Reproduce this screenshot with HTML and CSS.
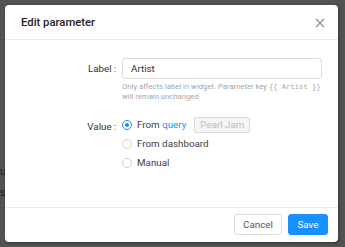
FILE: index.html
```html
<!DOCTYPE html>
<html>
<head>
<meta charset="utf-8">
<link rel="stylesheet" href="styles.css">
</head>
<body>
<div class="page">
  <div class="bg-line bg-l1">ut</div>
  <div class="bg-line bg-l2">s</div>
</div>
<div class="modal">
  <div class="modal-header">
    <span class="modal-title">Edit parameter</span>
    <svg class="close" width="10" height="10" viewBox="0 0 10 10"><path d="M1 1L9 9M9 1L1 9" stroke="#8c8c8c" stroke-width="1.1" fill="none"/></svg>
  </div>
  <div class="modal-body">
    <div class="row row-label">
      <div class="lbl">Label<span class="colon">:</span></div>
      <div class="ctl">
        <div class="input">Artist</div>
        <div class="help">Only affects label in widget. Parameter key <span class="mono">{{ Artist }}</span> will remain unchanged</div>
      </div>
    </div>
    <div class="row row-value">
      <div class="lbl lbl-value">Value<span class="colon">:</span></div>
      <div class="ctl radios">
        <div class="radio-row"><span class="radio checked"></span><span>From <span class="link">query</span></span><span class="pill">Pearl Jam</span></div>
        <div class="radio-row"><span class="radio"></span><span>From dashboard</span></div>
        <div class="radio-row"><span class="radio"></span><span>Manual</span></div>
      </div>
    </div>
  </div>
  <div class="modal-footer">
    <button class="btn">Cancel</button>
    <button class="btn primary">Save</button>
  </div>
</div>
</body>
</html>
```

FILE: styles.css
```css
html, body {
  margin: 0;
  padding: 0;
}
body {
  width: 345px;
  height: 247px;
  background: #525252;
  font-family: Roboto, "Liberation Sans", Arial, sans-serif;
  position: relative;
  overflow: hidden;
}
.page {
  position: absolute;
  left: 0;
  top: 0;
  width: 100%;
  height: 100%;
}
.bg-line {
  position: absolute;
  left: 0;
  font-size: 11px;
  color: #1e1e1e;
  letter-spacing: -2px;
}
.bg-l1 { top: 165px; }
.bg-l2 { top: 186px; }
.modal {
  position: absolute;
  left: 5px;
  top: 5px;
  width: 333px;
  height: 237px;
  background: #fff;
  border-radius: 4px;
  box-shadow: 1px 1px 3px rgba(0,0,0,0.35);
  display: flex;
  flex-direction: column;
}
.modal-header {
  height: 35px;
  box-sizing: border-box;
  border-bottom: 1px solid #ececec;
  display: flex;
  align-items: center;
  justify-content: space-between;
  padding: 1px 13px 0 16px;
}
.modal-title {
  font-size: 11.3px;
  color: #222;
  font-weight: 500;
}
.close { display: block; }
.modal-body {
  flex: 1;
  padding-top: 18px;
  font-size: 9.8px;
  color: #404040;
}
.row {
  display: flex;
}
.lbl {
  width: 111px;
  text-align: right;
  box-sizing: border-box;
  color: #333;
  line-height: 21px;
}
.colon {
  margin-left: 2px;
}
.ctl {
  margin-left: 6px;
  width: 200px;
}
.input {
  height: 21px;
  box-sizing: border-box;
  border: 1px solid #dcdcdc;
  border-radius: 3px;
  padding-left: 8px;
  line-height: 19px;
  color: #333;
}
.help {
  margin-top: 3px;
  font-size: 7.7px;
  line-height: 10px;
  color: #a6a6a6;
  width: 204px;
}
.mono {
  font-family: "Liberation Mono", monospace;
  font-size: 7.2px;
  white-space: nowrap;
}
.row-value {
  margin-top: 15px;
}
.lbl-value {
  line-height: 16px;
  padding-top: 2px;
}
.radios {
  display: flex;
  flex-direction: column;
  gap: 4px;
}
.radio-row {
  display: flex;
  align-items: center;
  height: 15px;
  gap: 5px;
}
.radio {
  width: 10px;
  height: 10px;
  box-sizing: border-box;
  border: 1px solid #d0d0d0;
  border-radius: 50%;
  position: relative;
  flex: none;
}
.radio.checked {
  border-color: #1890ff;
}
.radio.checked::after {
  content: "";
  position: absolute;
  left: 2px;
  top: 2px;
  width: 4px;
  height: 4px;
  border-radius: 50%;
  background: #1890ff;
}
.link { color: #1890ff; }
.pill {
  margin-left: 3px;
  width: 56px;
  height: 16px;
  box-sizing: border-box;
  border: 1px solid #d9d9d9;
  background: #f5f5f5;
  border-radius: 2px;
  color: #bfbfbf;
  padding-left: 5px;
  line-height: 14px;
}
.modal-footer {
  height: 35px;
  box-sizing: border-box;
  border-top: 1px solid #ececec;
  display: flex;
  justify-content: flex-end;
  align-items: center;
  gap: 6px;
  padding: 0 10px 2px 0;
}
.btn {
  height: 21px;
  box-sizing: border-box;
  border: 1px solid #dcdcdc;
  border-radius: 3px;
  background: #fff;
  font-family: Roboto, "Liberation Sans", Arial, sans-serif;
  font-size: 9.8px;
  color: #555;
  padding: 0;
  width: 48px;
}
.btn.primary {
  width: 40px;
  background: #1890ff;
  border-color: #1890ff;
  color: #fff;
}
```
